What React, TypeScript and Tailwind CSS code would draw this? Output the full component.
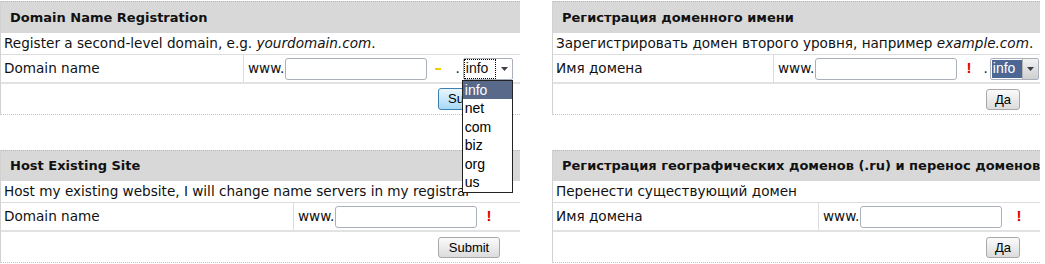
import React from 'react';

const verdana = { fontFamily: '"DejaVu Sans", Verdana, sans-serif' };
const arial = { fontFamily: '"Liberation Sans", Arial, sans-serif' };

interface PanelProps {
  title: string;
  desc: React.ReactNode;
  label: string;
  labelWidth: string;
  button: React.ReactNode;
  children: React.ReactNode;
  headerHeight: string;
}

const Panel: React.FC<PanelProps> = ({ title, desc, label, labelWidth, button, children, headerHeight }) => (
  <div className="border-l border-[#d2d2d2] text-[13.6px] text-[#111]" style={verdana}>
    <div
      className={`${headerHeight} bg-[#d8d8d8] border-t border-dotted border-[#b8b8b8] flex items-center pl-[9px] font-bold text-[13px] whitespace-nowrap overflow-hidden`}
    >
      {title}
    </div>
    <div className="h-[22px] flex items-center pl-[3px] border-b border-[#dcdcdc] whitespace-nowrap">{desc}</div>
    <div className="h-[29px] flex items-center border-b-2 border-[#e2e2e2]">
      <div className={`${labelWidth} shrink-0 h-full flex items-center pl-[3px] border-r border-[#dcdcdc]`}>{label}</div>
      <div className="flex items-center pl-[4px]">
        <span>www.</span>
        {children}
      </div>
    </div>
    <div className="h-[31px] flex items-center justify-end pr-[20px] border-b border-dotted border-[#c4c4c4]">{button}</div>
  </div>
);

const TextBox: React.FC = () => (
  <input
    type="text"
    className="ml-[1px] w-[142px] h-[22px] bg-white border border-[#a9b0ba] rounded-[3px] outline-none"
  />
);

const Arrow: React.FC = () => (
  <svg width="7" height="4" viewBox="0 0 7 4">
    <path d="M0 0h7L3.5 4z" fill="#3b3f48" />
  </svg>
);

const Bang: React.FC<{ ml: string }> = ({ ml }) => (
  <span className={`${ml} text-[#e00000] font-bold text-[15px]`} style={arial}>
    !
  </span>
);

const GrayButton: React.FC<{ label: string; w: string }> = ({ label, w }) => (
  <button
    className={`${w} h-[21px] rounded-[3px] border border-[#a8a8a8] bg-gradient-to-b from-[#fbfbfb] to-[#dcdcdc] text-[13px] text-black`}
    style={arial}
  >
    {label}
  </button>
);

const options = ['info', 'net', 'com', 'biz', 'org', 'us'];

export default function App() {
  return (
    <div className="w-[1045px] h-[264px] bg-white overflow-hidden flex pt-[1px]">
      {/* left column */}
      <div className="w-[520px] shrink-0 flex flex-col">
        <Panel
          headerHeight="h-[32px]"
          title="Domain Name Registration"
          desc={
            <>
              Register a second-level domain, e.g.&nbsp;<i>yourdomain.com</i>.
            </>
          }
          label="Domain name"
          labelWidth="w-[243px]"
          button={
            <button
              className="w-[62px] h-[22px] rounded-[3px] border border-[#3c7fb1] bg-gradient-to-b from-[#eaf6fd] to-[#a7d9f5] text-[13px] text-black text-left pl-[9px]"
              style={arial}
            >
              Submit
            </button>
          }
        >
          <TextBox />
          <span className="ml-[8px] w-[6px] h-[2px] bg-[#f2d000] inline-block" />
          <span className="ml-[14px]">.</span>
          <div className="relative ml-[3px]">
            <div className="w-[50px] h-[22px] border border-[#a9b0ba] rounded-[2px] bg-white flex items-center" style={arial}>
              <span className="ml-[1px] px-[1px] h-[18px] w-[30px] leading-[17px] outline outline-1 outline-dotted outline-black text-[14px]">
                info
              </span>
              <span className="ml-auto mr-[4px] flex items-center">
                <Arrow />
              </span>
            </div>
            <div className="absolute left-[-1px] top-[22px] w-[51px] border border-[#222] bg-white z-10" style={arial}>
              {options.map((o, i) => (
                <div
                  key={o}
                  className={`h-[18.5px] leading-[18px] pl-[2px] text-[14px] ${i === 0 ? 'bg-[#58698a] text-white' : 'text-black'}`}
                >
                  {o}
                </div>
              ))}
            </div>
          </div>
        </Panel>

        <div className="mt-[35px]">
          <Panel
            headerHeight="h-[31px]"
            title="Host Existing Site"
            desc="Host my existing website, I will change name servers in my registrar"
            label="Domain name"
            labelWidth="w-[293px]"
            button={<GrayButton label="Submit" w="w-[62px]" />}
          >
            <TextBox />
            <Bang ml="ml-[9px]" />
          </Panel>
        </div>
      </div>

      {/* right column */}
      <div className="ml-[32px] w-[488px] shrink-0 flex flex-col">
        <Panel
          headerHeight="h-[32px]"
          title="Регистрация доменного имени"
          desc={
            <>
              Зарегистрировать домен второго уровня, например&nbsp;<i>example.com</i>.
            </>
          }
          label="Имя домена"
          labelWidth="w-[221px]"
          button={<GrayButton label="Да" w="w-[34px]" />}
        >
          <TextBox />
          <Bang ml="ml-[9px]" />
          <span className="ml-[12px]">.</span>
          <div
            className="ml-[2px] w-[49px] h-[22px] border border-[#a9b0ba] rounded-[2px] bg-white flex items-center"
            style={arial}
          >
            <span className="ml-[1px] h-[18px] w-[30px] pl-[1px] leading-[17px] bg-[#4c6794] text-white text-[14px]">info</span>
            <span className="ml-auto w-[16px] h-full bg-gradient-to-b from-[#f2f2f2] to-[#cfcfcf] border-l border-[#b5b5b5] flex items-center justify-center">
              <Arrow />
            </span>
          </div>
        </Panel>

        <div className="mt-[35px]">
          <Panel
            headerHeight="h-[31px]"
            title="Регистрация географических доменов (.ru) и перенос доменов"
            desc="Перенести существующий домен"
            label="Имя домена"
            labelWidth="w-[266px]"
            button={<GrayButton label="Да" w="w-[34px]" />}
          >
            <TextBox />
            <Bang ml="ml-[14px]" />
          </Panel>
        </div>
      </div>
    </div>
  );
}
